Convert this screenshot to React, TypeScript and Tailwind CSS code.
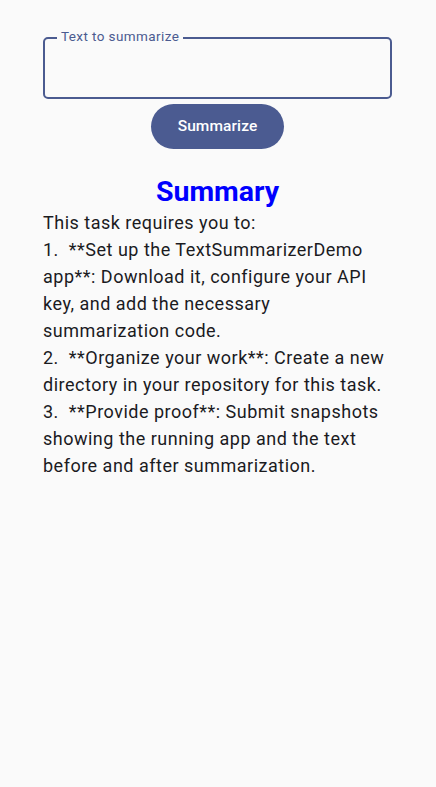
export default function App() {
  const lines = [
    "This task requires you to:",
    "1.  **Set up the TextSummarizerDemo app**: Download it, configure your API key, and add the necessary summarization code.",
    "2.  **Organize your work**: Create a new directory in your repository for this task.",
    "3.  **Provide proof**: Submit snapshots showing the running app and the text before and after summarization.",
  ];
  return (
    <div className="w-[436px] h-[787px] bg-[#fafafa] flex flex-col items-center pt-[28px] pl-[43px] pr-[44px]" style={{ fontFamily: "Roboto, sans-serif" }}>
      <div className="relative w-full pt-[9px]">
        <div className="h-[62px] w-full border-2 border-[#4b5b90] rounded-[5px]" />
        <span className="absolute left-[14px] top-[0px] px-[4px] bg-[#fafafa] text-[13.5px] leading-[16px] tracking-[0.4px] text-[#4b5b90]">
          Text to summarize
        </span>
      </div>
      <button className="mt-[5px] w-[133px] h-[45px] pt-[1px] rounded-full bg-[#4b5b91] text-white text-[15.5px] font-medium tracking-[0.1px] flex items-center justify-center">
        Summarize
      </button>
      <div className="mt-[26px] text-[28.5px] leading-[34px] font-bold text-[#0000ff]">Summary</div>
      <div className="w-full mt-[0px] text-[18px] leading-[27px] tracking-[0.5px] text-[#1b1b1f] whitespace-pre-wrap">
        {lines.map((l, i) => (
          <div key={i}>{l}</div>
        ))}
      </div>
    </div>
  );
}
